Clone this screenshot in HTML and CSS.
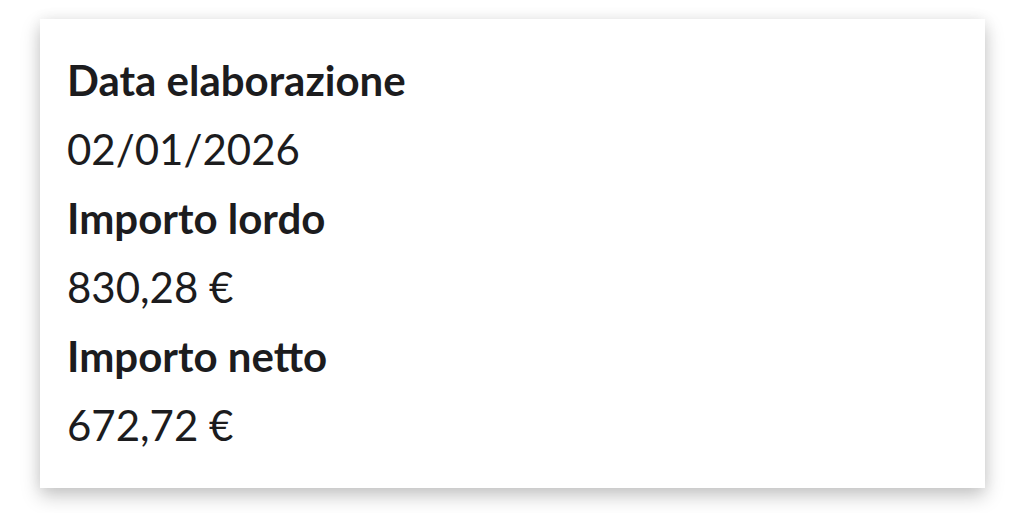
FILE: index.html
```html
<!DOCTYPE html>
<html lang="it">
<head>
<meta charset="utf-8">
<title>Dettaglio</title>
<link rel="stylesheet" href="styles.css">
</head>
<body>
<div class="card">
  <dl class="details">
    <dt class="label">Data elaborazione</dt>
    <dd class="value">02/01/2026</dd>
    <dt class="label">Importo lordo</dt>
    <dd class="value">830,28 €</dd>
    <dt class="label">Importo netto</dt>
    <dd class="value">672,72 €</dd>
  </dl>
</div>
</body>
</html>
```
FILE: styles.css
```css
html, body {
  margin: 0;
  padding: 0;
  background: #ffffff;
}
body {
  padding: 19px 39px 25px 40px;
  font-family: Lato, "Open Sans", sans-serif;
  color: #1c1c1e;
}
.card {
  background: #ffffff;
  height: 469px;
  box-sizing: border-box;
  padding: 27px 27px 0 27px;
  box-shadow: 0 8px 18px rgba(0, 0, 0, 0.22), 0 0 14px rgba(0, 0, 0, 0.06);
}
.details {
  margin: 0;
}
.label {
  font-weight: 700;
  font-size: 42px;
  line-height: 69px;
  height: 69px;
}
.value {
  margin: 0;
  font-weight: 400;
  font-size: 42px;
  line-height: 69px;
  height: 69px;
}
```
